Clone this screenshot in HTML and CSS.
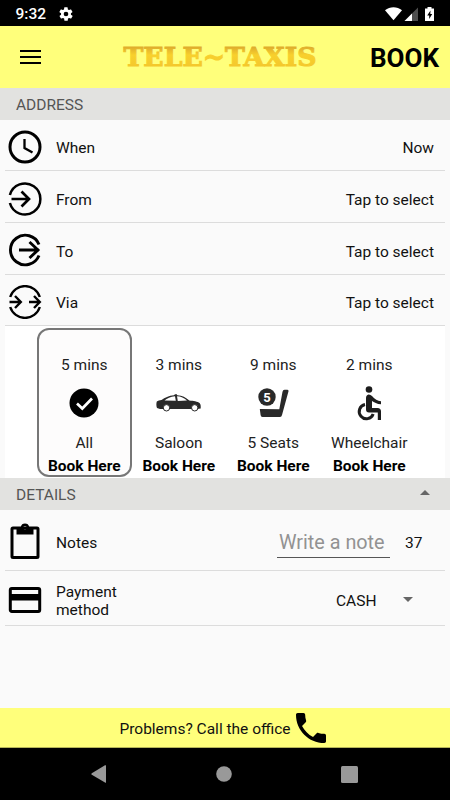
FILE: index.html
```html
<!DOCTYPE html>
<html lang="en">
<head>
    <meta charset="UTF-8">
    <meta name="viewport" content="width=device-width, initial-scale=1.0">
    <title>Tele-Taxis</title>
    <link rel="stylesheet" href="styles.css">
</head>
<body>
    <div class="status-bar">
        <span class="clock">9:32</span>
        <svg class="gear" viewBox="0 0 24 24" width="16" height="16"><path fill="#fff" fill-rule="evenodd" d="M19.400 13a7.500 7.500 0 0 0 0-2l2.100-1.600a.5.5 0 0 0 .1-.7l-2-3.400a.5.5 0 0 0-.6-.2l-2.500 1a7.300 7.300 0 0 0-1.700-1l-.4-2.700a.5.5 0 0 0-.5-.4h-4a.5.5 0 0 0-.5.4l-.4 2.700a7.300 7.300 0 0 0-1.700 1l-2.500-1a.5.5 0 0 0-.6.2l-2 3.400a.5.5 0 0 0 .1.700L4.600 11a7.500 7.500 0 0 0 0 2l-2.100 1.600a.5.5 0 0 0-.1.700l2 3.400c.1.200.4.300.6.200l2.500-1a7.300 7.300 0 0 0 1.700 1l.4 2.700c0 .2.200.4.500.4h4c.3 0 .5-.2.500-.4l.4-2.700a7.300 7.300 0 0 0 1.700-1l2.500 1c.2.100.5 0 .6-.2l2-3.400a.5.5 0 0 0-.1-.7zM12 15.500a3.500 3.500 0 1 1 0-7 3.500 3.500 0 0 1 0 7z"/></svg>
        <svg class="signals" viewBox="0 0 52 16" width="52" height="16">
            <path fill="#fff" d="M0 4.200C5 .3 12 .3 17 4.200L8.500 14.300z"/>
            <path fill="#4d4d4d" d="M33 1.500V15H19.500z"/>
            <path fill="#fff" d="M27 7.500V15h-7.500z"/>
            <path fill="#fff" fill-rule="evenodd" d="M42.500 1h4v1.500H49V15h-9V2.500h2.500zM45.500 4.500L42.200 9.500h2v3.500l3-5h-1.900z"/>
        </svg>
    </div>

    <header>
        <svg class="menu" viewBox="0 0 21 16" width="21" height="16"><path stroke="#000" stroke-width="2" d="M0 2h21M0 8h21M0 14h21"/></svg>
        <svg class="logo" viewBox="0 0 198 30" width="198" height="30">
            <defs>
                <linearGradient id="gold" x1="0" y1="0" x2="0" y2="1">
                    <stop offset=".2" stop-color="#e0ae2c"/>
                    <stop offset=".45" stop-color="#f8d02c"/>
                    <stop offset="1" stop-color="#f2c42c"/>
                </linearGradient>
            </defs>
            <text x="2.500" y="24.500" textLength="193" lengthAdjust="spacingAndGlyphs">TELE~TAXIS</text>
        </svg>
        <div class="book">BOOK</div>
    </header>

    <div class="section-title">ADDRESS</div>
    <div class="row">
        <svg class="icon" viewBox="0 0 34 34"><g fill="none" stroke="#000" stroke-width="3"><circle cx="17" cy="17" r="15"/><path stroke-width="2.300" d="M16.500 9v9l8 4.500"/></g></svg>
        <span class="label">When</span>
        <span class="value">Now</span>
    </div>
    <div class="row">
        <svg class="icon" viewBox="0 0 34 34"><g fill="none" stroke="#000" stroke-width="2.500"><path d="M1.900 13A15.500 15.500 0 1 1 1.900 21"/><path stroke-width="2.700" d="M3.500 17h18M13.500 9.500L21 17l-7.500 7.500"/></g></svg>
        <span class="label">From</span>
        <span class="value">Tap to select</span>
    </div>
    <div class="row">
        <svg class="icon" viewBox="0 0 34 34"><g fill="none" stroke="#000" stroke-width="2.900"><path d="M31 11.500A14.800 14.800 0 1 0 31 22.500"/><path d="M11 17h20M21.500 9l8.500 8-8.500 8"/></g></svg>
        <span class="label">To</span>
        <span class="value">Tap to select</span>
    </div>
    <div class="row">
        <svg class="icon" viewBox="0 0 34 34"><g fill="none" stroke="#000" stroke-width="2.400"><path d="M2.200 12A15.500 15.500 0 0 1 31.800 12M2.200 22A15.500 15.500 0 0 0 31.800 22"/><path d="M1.500 17h11M7 11l5.800 6L7 23M21 17h11M26 11l5.800 6-5.800 6"/></g></svg>
        <span class="label">Via</span>
        <span class="value">Tap to select</span>
    </div>

    <div class="cars">
        <div class="car selected">
            <div class="time">5 mins</div>
            <svg viewBox="0 0 48 40" width="48" height="40"><circle cx="24" cy="20" r="14.500"/><path fill="none" stroke="#fff" stroke-width="2.700" d="M17 20.500l5.300 5L32 15.500"/></svg>
            <div class="name">All</div>
            <div class="book-here">Book Here</div>
        </div>
        <div class="car">
            <div class="time">3 mins</div>
            <svg viewBox="0 0 48 40" width="48" height="40">
                <path fill="#292929" d="M1.800 18.500c1-1 3-1.300 4.700-1.600 3.500-2.400 7-4.200 12.500-4.700l1-.9h1.800l.5.900c5 .2 8.500 2.200 12 5.200 4 .3 8.500 1 10.200 2.600.9.900 1.200 1.900 1.200 3v2.500l-3.500.6H5L2 25c-.8-2-.8-4.500-.2-6.500z"/>
                <path fill="#fff" d="M9.500 17.500c2.500-2.200 6-3.800 10.500-4.200l.8 4.500zM22 13.300c4 .2 7 1.500 10 4.300l-9.200.3z"/>
                <circle cx="11.500" cy="24.800" r="3.200" fill="#fff" stroke="#292929" stroke-width="1"/><circle cx="39.700" cy="24.800" r="3.200" fill="#fff" stroke="#292929" stroke-width="1"/>
            </svg>
            <div class="name">Saloon</div>
            <div class="book-here">Book Here</div>
        </div>
        <div class="car">
            <div class="time">9 mins</div>
            <svg viewBox="0 0 48 40" width="48" height="40"><circle cx="18" cy="14" r="8.700" fill="#292929"/><path fill="#292929" d="M10.800 26l19.500.3 3.200-17.500q.4-2 2-2h3q1.300 0 1 1.500L33 32q-.4 2-2 2H13.500q-1.700 0-1.900-2z"/><text class="seat-count" x="18" y="18.500">5</text></svg>
            <div class="name">5 Seats</div>
            <div class="book-here">Book Here</div>
        </div>
        <div class="car">
            <div class="time">2 mins</div>
            <svg viewBox="0 0 48 40" width="48" height="40"><circle cx="24" cy="6.500" r="3.300" fill="#1c1c1c"/><path fill="#1c1c1c" d="M21 15q0-3 2.500-3.500 1.800-.2 3.500 1.500 4 5 9 5.200v3c-4 0-7-1.800-9-3.200v7h5.500q3.500 0 3.500 3.500V37h-3.200v-7.500H24q-3 0-3-3z"/><path fill="none" stroke="#1c1c1c" stroke-width="3" d="M20 21.500a7.200 7.200 0 1 0 8.200 9.500"/></svg>
            <div class="name">Wheelchair</div>
            <div class="book-here">Book Here</div>
        </div>
    </div>

    <div class="section-title details">DETAILS <span class="arrow up"></span></div>
    <div class="row notes">
        <svg class="icon tall" viewBox="0 0 34 38"><rect x="4" y="6" width="26" height="29.500" rx="1" fill="none" stroke="#000" stroke-width="3"/><path fill-rule="evenodd" d="M8.500 5h4.300a4.300 4.300 0 0 1 8.400 0h4.300v7.500h-17zM17 4a1.800 1.800 0 1 0 0 3.600A1.800 1.800 0 0 0 17 4z"/></svg>
        <span class="label">Notes</span>
        <input class="note" type="text" placeholder="Write a note">
        <span class="count">37</span>
    </div>
    <div class="row payment">
        <svg class="icon" viewBox="0 0 34 34"><rect x="2.300" y="5.500" width="29.400" height="23" rx="1.500" fill="none" stroke="#000" stroke-width="3"/><path d="M2 11h30v6.500H2z"/></svg>
        <span class="label">Payment method</span>
        <span class="cash">CASH</span>
        <span class="arrow down"></span>
    </div>

    <footer>
        <span>Problems? Call the office</span>
        <svg viewBox="3 3 18 18" width="30" height="30"><path d="M6.620 10.790c1.440 2.830 3.760 5.140 6.590 6.590l2.200-2.200c.27-.27.670-.36 1.020-.24 1.120.370 2.330.570 3.570.570.550 0 1 .45 1 1V20c0 .55-.45 1-1 1-9.390 0-17-7.610-17-17 0-.55.450-1 1-1h3.500c.55 0 1 .45 1 1 0 1.250.200 2.450.570 3.570.110.350.030.740-.25 1.020z"/></svg>
    </footer>
    <nav>
        <svg viewBox="0 0 16 18" width="16" height="18"><path d="M15 .5v17q0 .5-1 0L.8 9.800q-1-.8 0-1.600L14 .3q1-.4 1 .2z"/></svg>
        <svg viewBox="0 0 16 16" width="16" height="16"><circle cx="8" cy="8" r="7.800"/></svg>
        <svg viewBox="0 0 17 17" width="17" height="17"><rect width="17" height="17" rx="1.500"/></svg>
    </nav>
</body>
</html>
```
FILE: styles.css
```css
* { box-sizing: border-box; }
body { margin: 0; height: 800px; display: flex; flex-direction: column; background: #fafafa; color: #111; font-family: Roboto, sans-serif; font-size: 15.5px; line-height: 18px; overflow: hidden; }
svg { display: block; flex: none; }

.status-bar { height: 26px; flex: none; display: flex; align-items: center; padding: 1px 14px 0 15.5px; background: #000; color: #fff; }
.clock { font-size: 15.5px; font-weight: 500; width: 42px; padding-top: 1px; }
.signals { margin-left: auto; margin-right: -1px; }

header { height: 61.5px; flex: none; display: flex; align-items: center; background: #ffff7b; padding: 0 11px 0 20px; }
.menu { margin-right: 80px; }
.logo { margin-top: -1px; }
.logo text { font-family: "DejaVu Serif", serif; font-weight: bold; font-size: 25.5px; fill: url(#gold); stroke: url(#gold); stroke-width: 1px; }
.book { margin-left: auto; font-size: 26px; font-weight: 700; line-height: 30px; padding-top: 2px; color: #000; }

.section-title { height: 32px; flex: none; display: flex; align-items: center; justify-content: space-between; padding: 2px 20px 0 16px; background: #e2e2e0; color: #555; }
.arrow { width: 0; height: 0; border-left: 5.5px solid transparent; border-right: 5.5px solid transparent; }
.up { border-bottom: 5.5px solid #666; margin-top: -4px; }
.down { border-top: 5.5px solid #666; }

.row { height: 51.7px; flex: none; margin: 0 5px; padding: 4px 11px 0 3px; display: flex; align-items: center; border-bottom: 1px solid #dcdcdc; }
.icon { width: 34px; height: 34px; }
.label { margin-left: 14px; width: 90px; padding-top: 3px; }
.value { margin-left: auto; padding-top: 3px; }

.cars { height: 151.5px; flex: none; display: flex; margin: 0 5px; padding: 2px 0 1px 32px; background: #fff; color: #222; }
.car { width: 94.5px; display: flex; flex-direction: column; align-items: center; padding-top: 26px; border: 2px solid transparent; border-radius: 12px; }
.car:last-child { margin-left: 1.5px; }
.selected { background: #fdfcfc; border-color: #777; }
.car svg { margin: 9px 0 11px; }
.name { margin-bottom: 5px; }
.book-here { font-weight: 700; white-space: nowrap; color: #000; }
.seat-count { fill: #fff; font-size: 13px; font-weight: 700; text-anchor: middle; }

.notes { height: 61px; padding-top: 3px; }
.tall { height: 38px; }
.note { width: 113px; height: 31px; margin-left: auto; margin-top: 3px; padding: 0 0 0 2px; border: 0; border-bottom: 1px solid #555; background: transparent; font-family: inherit; font-size: 19.8px; }
.note::placeholder { color: #929292; opacity: 1; }
.count { width: 29px; margin-left: 15px; padding-top: 3px; }
.payment { height: 55px; }
.cash { margin-left: auto; margin-right: 26.5px; padding-top: 3px; }
.payment .arrow { margin-right: 21px; }

footer { height: 40px; flex: none; margin-top: auto; display: flex; align-items: center; justify-content: center; gap: 5px; padding-right: 5px; background: #ffff7b; border-bottom: 1px solid #b5b557; }
footer span { padding-top: 2px; }
nav { height: 52px; flex: none; display: flex; align-items: center; justify-content: space-between; padding: 0 92px 0 91px; background: #000; }
nav svg { fill: #999; }
```
